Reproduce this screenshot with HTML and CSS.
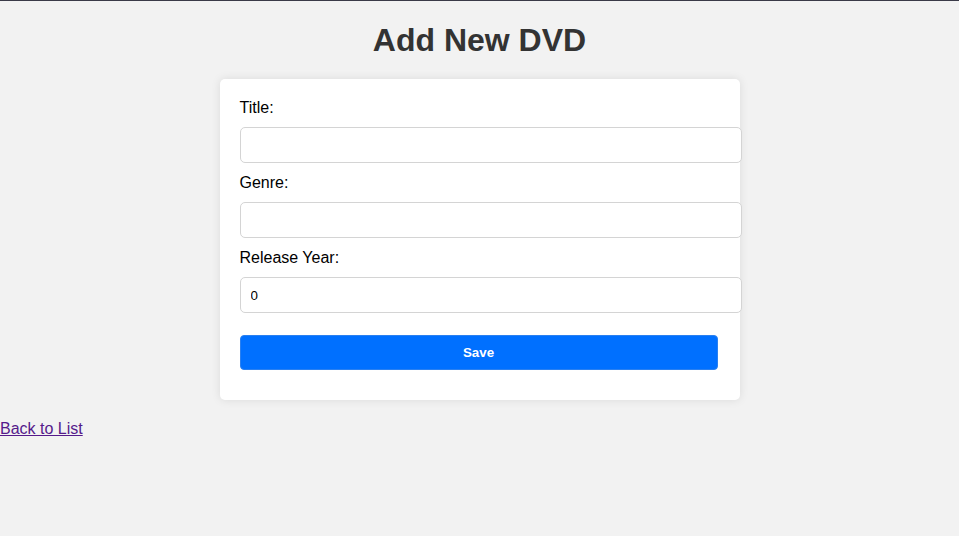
FILE: index.html
```html
<!DOCTYPE html>
<html lang="en">
<head>
<meta charset="utf-8">
<title>Add New DVD</title>
<link rel="stylesheet" href="styles.css">
</head>
<body>
<h1 class="page-title">Add New DVD</h1>
<form class="card">
  <label class="field-label" for="title">Title:</label>
  <input class="field-input" id="title" type="text">
  <label class="field-label" for="genre">Genre:</label>
  <input class="field-input" id="genre" type="text">
  <label class="field-label" for="year">Release Year:</label>
  <input class="field-input" id="year" type="number" value="0">
  <button class="save-btn" type="button">Save</button>
</form>
<a class="back-link" href="#">Back to List</a>
</body>
</html>
```
FILE: styles.css
```css
html, body {
  margin: 0;
  padding: 0;
}
body {
  background: #f2f2f2;
  font-family: "Liberation Sans", Arial, sans-serif;
  font-size: 16px;
  color: #000;
  border-top: 1px solid #3a3a48;
  min-height: 535px;
}
.page-title {
  text-align: center;
  color: #333;
  font-size: 32px;
  font-weight: bold;
  margin: 21px 0 20px;
  line-height: 37px;
}
.card {
  width: 480px;
  margin: 0 auto 20px;
  padding: 20px;
  background: #fff;
  border-radius: 5px;
  box-shadow: 0 0 10px rgba(0, 0, 0, 0.1);
}
.field-label {
  display: block;
  margin-bottom: 10px;
  line-height: 18px;
}
.field-input {
  display: block;
  width: 100%;
  height: 14px;
  padding: 10px;
  margin: 0 0 11px;
  border: 1px solid #d4d4d4;
  border-radius: 5px;
  font-family: "Liberation Sans", Arial, sans-serif;
  font-size: 13.33px;
  background: #fff;
  color: #000;
  outline: none;
  box-sizing: content-box;
  -moz-appearance: textfield;
}
.field-input::-webkit-outer-spin-button,
.field-input::-webkit-inner-spin-button {
  -webkit-appearance: none;
  margin: 0;
}
.save-btn {
  display: block;
  width: 478px;
  height: 35px;
  margin: 22px 0 10px;
  padding: 0;
  background: #0070ff;
  color: #fff;
  border: 1px solid #2a80f0;
  border-radius: 4px;
  font-family: "Liberation Sans", Arial, sans-serif;
  font-size: 13.33px;
  font-weight: bold;
  cursor: pointer;
}
.back-link {
  color: #551a8b;
  text-decoration: underline;
  line-height: 18px;
}
```
